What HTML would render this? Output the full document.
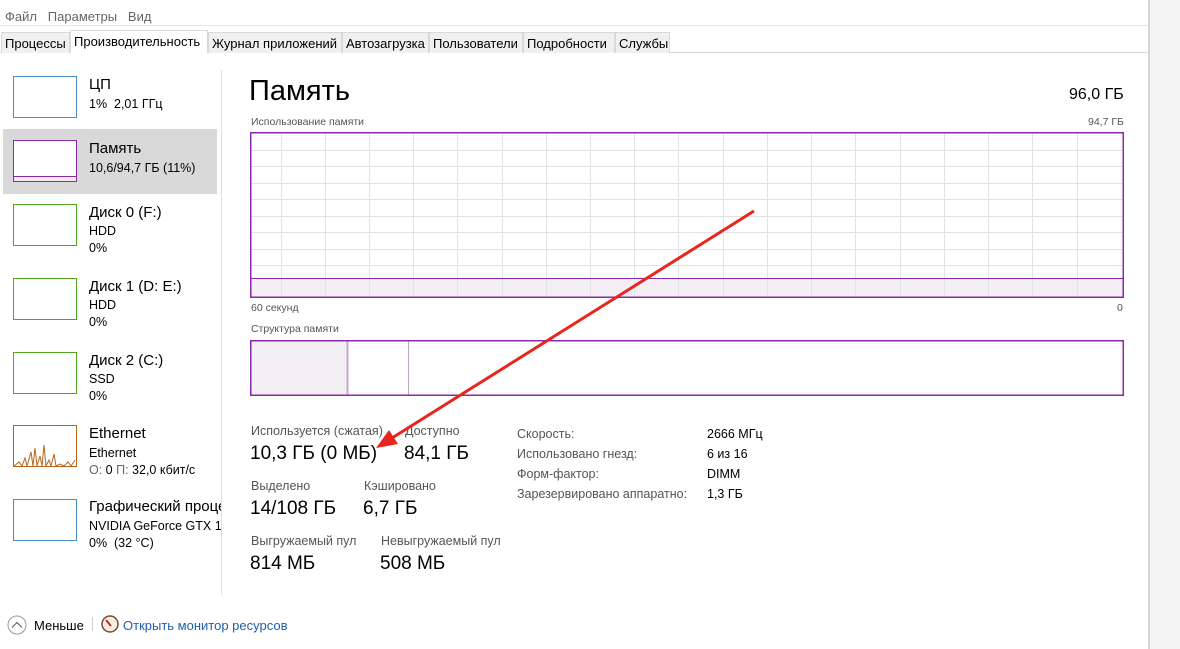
<!DOCTYPE html>
<html><head><meta charset="utf-8"><style>
*{margin:0;padding:0;box-sizing:border-box}
body{width:1180px;height:649px;overflow:hidden;background:#fff;font-family:"Liberation Sans","Noto Sans CJK SC",sans-serif;color:#000;position:relative}
.a{position:absolute;white-space:nowrap}
.g{color:#666}
.tab{position:absolute;top:32px;height:21px;font-size:13px;padding:3px 3px 0;border:1px solid #d9d9d9;border-bottom:none;background:#f0f0f0}
.th{position:absolute;left:13px;width:64px;height:42px;border:1px solid}
.t1{font-size:15px}
.t2{font-size:12.5px}
.s{font-size:12.5px;color:#555}
.b{font-size:19px}
</style></head><body>
<div class="a" style="left:1148px;top:0;width:32px;height:649px;background:#f3f3f3;border-left:2px solid #d6d6d6"></div>
<div class="a g" style="left:5px;top:9px;font-size:13px">Файл&nbsp;&nbsp; Параметры&nbsp;&nbsp; Вид</div>
<div class="a" style="left:0;top:25px;width:1148px;border-top:1px solid #e5e5e5"></div>
<div class="a" style="left:0;top:52px;width:1148px;border-top:1px solid #d9d9d9"></div>
<div class="tab" style="left:1px;width:69px">Процессы</div>
<div class="tab" style="left:70px;width:138px;top:30px;height:23px;background:#fff">Производительность</div>
<div class="tab" style="left:208px;width:134px">Журнал приложений</div>
<div class="tab" style="left:342px;width:87px">Автозагрузка</div>
<div class="tab" style="left:429px;width:94px">Пользователи</div>
<div class="tab" style="left:523px;width:92px">Подробности</div>
<div class="tab" style="left:615px;width:55px">Службы</div>

<div class="a" style="left:3px;top:129px;width:214px;height:65px;background:#d9d9d9"></div>
<div class="a" style="left:221px;top:70px;height:525px;border-left:1px solid #e0e0e0"></div>

<div class="th" style="top:76px;border-color:#4a8fc4"></div>
<div class="a t1" style="left:89px;top:76px">ЦП</div>
<div class="a t2" style="left:89px;top:97px">1%&nbsp; 2,01 ГГц</div>

<div class="th" style="top:140px;border-color:#8b2aa6;background:#fff"></div>
<div class="a" style="left:14px;top:176px;width:62px;height:5px;background:#f2e8f4;border-top:1px solid #8b2aa6"></div>
<div class="a t1" style="left:89px;top:140px">Память</div>
<div class="a t2" style="left:89px;top:161px">10,6/94,7 ГБ (11%)</div>

<div class="th" style="top:204px;border-color:#4ea71f"></div>
<div class="a t1" style="left:89px;top:204px">Диск 0 (F:)</div>
<div class="a t2" style="left:89px;top:224px">HDD</div>
<div class="a t2" style="left:89px;top:241px">0%</div>

<div class="th" style="top:278px;border-color:#4ea71f"></div>
<div class="a t1" style="left:89px;top:278px">Диск 1 (D: E:)</div>
<div class="a t2" style="left:89px;top:298px">HDD</div>
<div class="a t2" style="left:89px;top:315px">0%</div>

<div class="th" style="top:352px;border-color:#4ea71f"></div>
<div class="a t1" style="left:89px;top:352px">Диск 2 (C:)</div>
<div class="a t2" style="left:89px;top:372px">SSD</div>
<div class="a t2" style="left:89px;top:389px">0%</div>

<div class="th" style="top:425px;border-color:#b8651a"></div>
<svg class="a" style="left:14px;top:440px" width="62" height="27"><polyline fill="none" stroke="#b8651a" stroke-width="1" points="0,26 5,22 8,26 11,18 13,26 17,12 19,26 21,8 23,26 26,16 28,26 30,5 32,26 35,20 37,26 40,14 42,26 46,24 50,26 54,22 57,26 61,20"/></svg>
<div class="a t1" style="left:89px;top:425px">Ethernet</div>
<div class="a t2" style="left:89px;top:446px">Ethernet</div>
<div class="a t2" style="left:89px;top:463px"><span class="g">О:</span> 0 <span class="g">П:</span> 32,0 кбит/с</div>

<div class="th" style="top:499px;border-color:#4a8fc4"></div>
<div class="a" style="left:89px;top:498px;width:132px;overflow:hidden;font-size:15px">Графический процессор</div>
<div class="a" style="left:89px;top:519px;width:132px;overflow:hidden;font-size:12.5px">NVIDIA GeForce GTX 1060</div>
<div class="a t2" style="left:89px;top:536px">0%&nbsp; (32 °C)</div>

<div class="a" style="left:249px;top:75px;font-size:29px">Память</div>
<div class="a" style="left:1069px;top:86px;font-size:16px">96,0 ГБ</div>
<div class="a s" style="left:251px;top:116px;font-size:10.5px">Использование памяти</div>
<div class="a s" style="left:1088px;top:116px;font-size:10.5px">94,7 ГБ</div>

<svg class="a" style="left:250px;top:132px" width="874" height="166">
<rect x="0.5" y="146" width="873" height="19.5" fill="#f4eff5"/>
<g stroke="#e3e3e3" stroke-width="1">
<path d="M31.5 0V166M75.5 0V166M119.5 0V166M163.5 0V166M207.5 0V166M252.5 0V166M296.5 0V166M340.5 0V166M384.5 0V166M428.5 0V166M473.5 0V166M517.5 0V166M561.5 0V166M605.5 0V166M650.5 0V166M694.5 0V166M738.5 0V166M782.5 0V166M827.5 0V166"/>
<path d="M0 18.5H874M0 34.5H874M0 51.5H874M0 67.5H874M0 84.5H874M0 100.5H874M0 117.5H874M0 133.5H874"/>
</g>
<line x1="0" y1="146.5" x2="874" y2="146.5" stroke="#8b2aa6"/>
<rect x="0.75" y="0.75" width="872.5" height="164.5" fill="none" stroke="#8b2aa6" stroke-width="1.5"/>
</svg>
<div class="a s" style="left:251px;top:302px;font-size:10.5px">60 секунд</div>
<div class="a s" style="left:1117px;top:302px;font-size:10.5px">0</div>
<div class="a s" style="left:251px;top:323px;font-size:10.5px">Структура памяти</div>
<svg class="a" style="left:250px;top:340px" width="874" height="56">
<rect x="1" y="1" width="96" height="54" fill="#f2f0f2"/>
<line x1="97.5" y1="1" x2="97.5" y2="55" stroke="#c9a6d3" stroke-width="2"/>
<line x1="158.5" y1="1" x2="158.5" y2="55" stroke="#b9a8c0"/>
<rect x="0.75" y="0.75" width="872.5" height="54.5" fill="none" stroke="#8b2aa6" stroke-width="1.5"/>
</svg>

<div class="a s" style="left:251px;top:424px">Используется (сжатая)</div>
<div class="a b" style="left:250px;top:443px">10,3 ГБ (0 МБ)</div>
<div class="a s" style="left:405px;top:424px">Доступно</div>
<div class="a b" style="left:404px;top:443px">84,1 ГБ</div>
<div class="a s" style="left:251px;top:479px">Выделено</div>
<div class="a b" style="left:250px;top:498px">14/108 ГБ</div>
<div class="a s" style="left:364px;top:479px">Кэшировано</div>
<div class="a b" style="left:363px;top:498px">6,7 ГБ</div>
<div class="a s" style="left:251px;top:534px">Выгружаемый пул</div>
<div class="a b" style="left:250px;top:553px">814 МБ</div>
<div class="a s" style="left:381px;top:534px">Невыгружаемый пул</div>
<div class="a b" style="left:380px;top:553px">508 МБ</div>

<div class="a s" style="left:517px;top:424px;line-height:20px">Скорость:<br>Использовано гнезд:<br>Форм-фактор:<br>Зарезервировано аппаратно:</div>
<div class="a" style="left:707px;top:424px;line-height:20px;font-size:12.5px">2666 МГц<br>6 из 16<br>DIMM<br>1,3 ГБ</div>

<svg class="a" style="left:0;top:0" width="1180" height="649" style="pointer-events:none">
<line x1="754" y1="211" x2="392" y2="438" stroke="#e8261f" stroke-width="3"/>
<polygon points="376,448 389,430 398,444" fill="#e8261f"/>
</svg>

<svg class="a" style="left:7px;top:615px" width="20" height="20"><circle cx="10" cy="10" r="9" fill="none" stroke="#999"/><path d="M5 12.5L10 7.5L15 12.5" fill="none" stroke="#666" stroke-width="1.2"/></svg>
<div class="a" style="left:34px;top:618px;font-size:13px">Меньше</div>
<div class="a" style="left:92px;top:617px;height:14px;border-left:1px solid #ccc"></div>
<svg class="a" style="left:101px;top:615px" width="18" height="18"><circle cx="9" cy="9" r="8" fill="#f6efe2" stroke="#7a4a3a" stroke-width="1.5"/><line x1="5" y1="5" x2="10" y2="11" stroke="#c42020" stroke-width="1.8"/></svg>
<div class="a" style="left:123px;top:618px;font-size:13px;color:#1f5fa8">Открыть монитор ресурсов</div>
</body></html>
